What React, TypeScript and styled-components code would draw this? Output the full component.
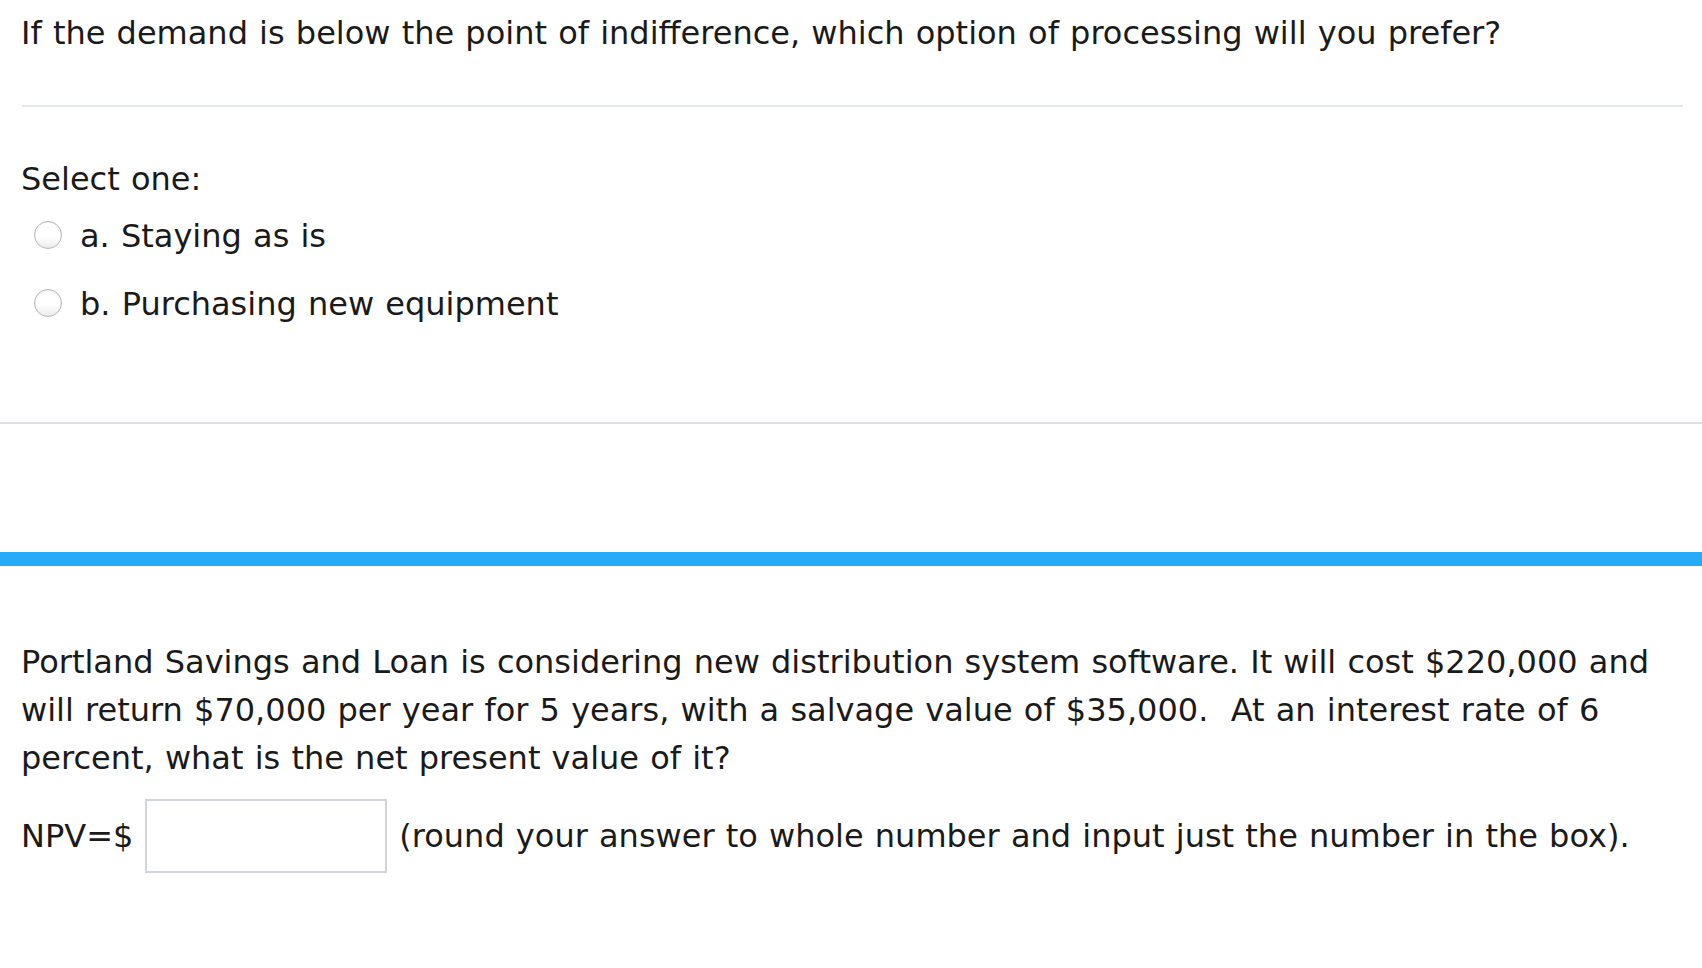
import React from "react";
import styled, { createGlobalStyle } from "styled-components";

const Global = createGlobalStyle`
  html, body {
    margin: 0;
    padding: 0;
    background: #ffffff;
  }
  body {
    font-family: "DejaVu Sans", Verdana, sans-serif;
    font-size: 32px;
    line-height: 48px;
    word-spacing: 1px;
    color: #1a1a1a;
  }
`;

const Page = styled.div`
  width: 1702px;
  display: flex;
  flex-direction: column;
`;

const QuestionBlock = styled.section`
  display: flex;
  flex-direction: column;
  padding: 9px 19px 0 21px;
`;

const QText = styled.p`
  margin: 0;
  white-space: nowrap;
`;

const InnerRule = styled.hr`
  border: 0;
  height: 2px;
  background: #e3e7eb;
  margin: 48px 0 0 1px;
`;

const Prompt = styled.div`
  margin-top: 48px;
`;

const Options = styled.div`
  display: flex;
  flex-direction: column;
  gap: 20px;
  margin-top: 9px;
  padding-left: 13px;
`;

const OptionRow = styled.label`
  display: flex;
  align-items: center;
  gap: 18px;
  height: 48px;
`;

const Radio = styled.span`
  width: 26px;
  height: 26px;
  border-radius: 50%;
  border: 1px solid #b4b4b4;
  background: linear-gradient(#ffffff 0%, #ffffff 55%, #ececec 100%);
  box-shadow: inset 0 1px 1px rgba(0, 0, 0, 0.05);
  flex: none;
  margin-top: -3px;
`;

const OptionText = styled.span`
  white-space: nowrap;
`;

const FullRule = styled.hr`
  border: 0;
  height: 2px;
  background: #dde2e6;
  margin: 94px 0 0 0;
`;

const BlueBar = styled.div`
  height: 14px;
  background: #26aaf9;
  margin-top: 128px;
`;

const Problem = styled.section`
  display: flex;
  flex-direction: column;
  padding: 72px 19px 0 21px;
`;

const Para = styled.p`
  margin: 0;
  white-space: nowrap;
`;

const AnswerRow = styled.div`
  display: flex;
  align-items: center;
  gap: 12px;
  margin-top: 17px;
  white-space: nowrap;
`;

const AnswerInput = styled.input`
  box-sizing: border-box;
  width: 242px;
  height: 74px;
  border: 2px solid #d1d5db;
  border-radius: 0;
  background: #fff;
  font: inherit;
  padding: 0 12px;
  outline: none;
`;

export default function App() {
  return (
    <>
      <Global />
      <Page>
        <QuestionBlock>
          <QText>
            If the demand is below the point of indifference, which option of
            processing will you prefer?
          </QText>
          <InnerRule />
          <Prompt>Select one:</Prompt>
          <Options>
            <OptionRow>
              <Radio />
              <OptionText>a. Staying as is</OptionText>
            </OptionRow>
            <OptionRow>
              <Radio />
              <OptionText>b. Purchasing new equipment</OptionText>
            </OptionRow>
          </Options>
        </QuestionBlock>
        <FullRule />
        <BlueBar />
        <Problem>
          <Para>
            Portland Savings and Loan is considering new distribution system
            software. It will cost $220,000 and
          </Para>
          <Para>
            will return $70,000 per year for 5 years, with a salvage value of
            $35,000.{"\u00a0 "}At an interest rate of 6
          </Para>
          <Para>percent, what is the net present value of it?</Para>
          <AnswerRow>
            <span>NPV=$</span>
            <AnswerInput type="text" aria-label="NPV" />
            <span>
              (round your answer to whole number and input just the number in
              the box).
            </span>
          </AnswerRow>
        </Problem>
      </Page>
    </>
  );
}
